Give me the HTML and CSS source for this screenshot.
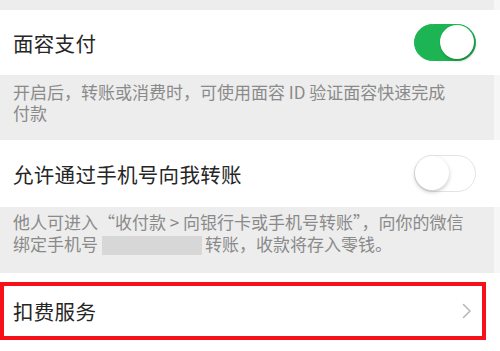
FILE: index.html
```html
<!DOCTYPE html>
<html lang="zh">
<head>
<meta charset="utf-8">
<link rel="stylesheet" href="styles.css">
</head>
<body>
<div class="page">
  <div class="gap"></div>
  <div class="cell">
    <span class="title">面容支付</span>
    <span class="switch on"><span class="knob"></span></span>
  </div>
  <div class="desc d1">开启后，转账或消费时，可使用面容 ID 验证面容快速完成<br>付款</div>
  <div class="cell c2">
    <span class="title">允许通过手机号向我转账</span>
    <span class="switch"><span class="knob"></span></span>
  </div>
  <div class="desc d2">他人可进入“收付款 &gt; 向银行卡或手机号转账”，向你的微信<br>绑定手机号<span class="mask"></span>转账，收款将存入零钱。</div>
  <div class="section">
    <div class="cell boxed">
      <span class="title">扣费服务</span>
      <svg class="chev" width="10" height="16" viewBox="0 0 10 16"><path d="M1.5 1.5 L8 8 L1.5 14.5" fill="none" stroke="#b8b8b8" stroke-width="1.6" stroke-linecap="round" stroke-linejoin="round"/></svg>
    </div>
  </div>
</div>
</body>
</html>
```

FILE: styles.css
```css
html, body {
  margin: 0;
  padding: 0;
}
body {
  background: #f6f6f6;
  font-family: "Noto Sans CJK SC", "Noto Sans", sans-serif;
  width: 500px;
  height: 351px;
  overflow: hidden;
}
.page {
  display: flex;
  flex-direction: column;
}
.gap {
  height: 10px;
  background: #ededed;
  margin-right: 6px;
}
.cell {
  background: #fff;
  height: 65px;
  padding: 0 24px 0 13px;
  display: flex;
  align-items: center;
  justify-content: space-between;
  box-sizing: border-box;
}
.cell.c2 {
  height: 67px;
}
.title {
  font-size: 20.5px;
  color: #262626;
  letter-spacing: 0.3px;
}
.switch {
  width: 62px;
  height: 37px;
  border-radius: 19px;
  background: #fff;
  border: 1.5px solid #e3e3e3;
  box-sizing: border-box;
  position: relative;
  display: block;
}
.switch.on {
  background: #1db553;
  border-color: #1db553;
}
.knob {
  position: absolute;
  top: 0;
  left: 0;
  width: 34px;
  height: 34px;
  border-radius: 50%;
  background: #fff;
  box-shadow: 0 2px 4px rgba(0,0,0,0.22);
}
.switch.on .knob {
  left: 25px;
  box-shadow: 1px 2px 3px rgba(0,0,0,0.25);
}
.desc {
  background: #ededed;
  margin-right: 6px;
  padding: 0 13px;
  font-size: 17px;
  color: #8a8a8a;
  box-sizing: border-box;
}
.d1 {
  height: 65px;
  line-height: 21px;
  padding-top: 6px;
}
.d2 {
  height: 66px;
  line-height: 22px;
  padding-top: 4px;
}
.mask {
  display: inline-block;
  width: 100px;
  height: 19px;
  background: #d7d7d7;
  vertical-align: -4px;
  margin: 0 3px 0 4px;
}
.section {
  background: #fff;
  padding: 9px 14px 11px 0;
}
.boxed {
  height: 58px;
  border: 4px solid #f5101a;
  padding: 0 10px 0 9px;
}
.chev {
  display: block;
}
```
